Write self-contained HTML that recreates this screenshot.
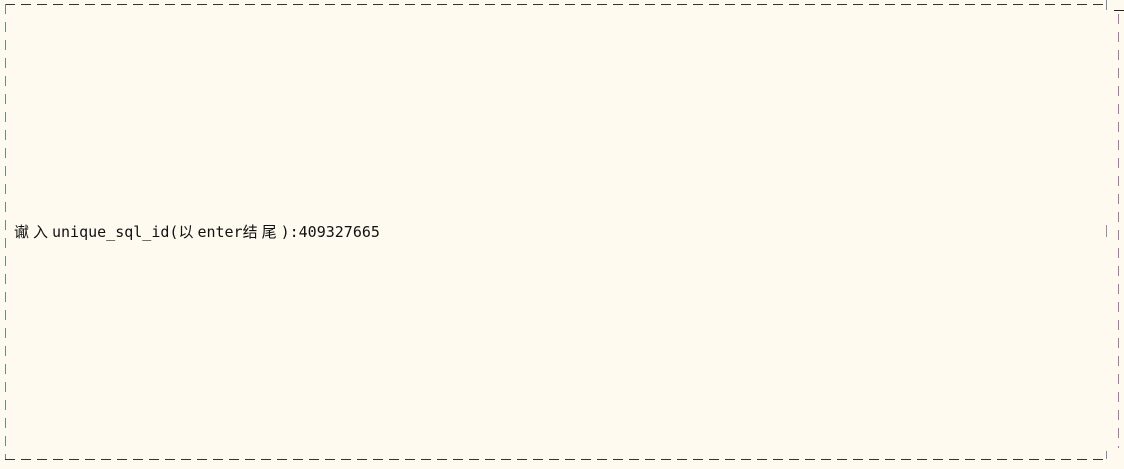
<!DOCTYPE html>
<html><head><meta charset="utf-8"><style>
html,body{margin:0;padding:0;background:#fffaf0;width:1124px;height:469px;overflow:hidden}
.t{position:absolute;left:14px;top:222px;font-family:"DejaVu Sans Mono","Liberation Mono","Noto Sans CJK SC",monospace;font-size:15px;color:#111;white-space:pre;line-height:20px}
.c{display:inline-block;width:19px;font-family:"Noto Sans CJK SC",sans-serif;font-size:15px}
svg{position:absolute;left:0;top:0}
</style></head><body>
<svg width="1124" height="469">
<line x1="5" y1="4.5" x2="1106" y2="4.5" stroke="#333" stroke-width="1" stroke-dasharray="10 6"/>
<line x1="5" y1="459.5" x2="1106" y2="459.5" stroke="#333" stroke-width="1" stroke-dasharray="10 6"/>
<line x1="5.5" y1="4" x2="5.5" y2="459" stroke="#6a8a8a" stroke-width="1" stroke-dasharray="10 8"/>
<line x1="1106.5" y1="0" x2="1106.5" y2="10" stroke="#7a8aa8" stroke-width="1"/>
<line x1="1106.5" y1="225" x2="1106.5" y2="237" stroke="#a08aa8" stroke-width="1"/>
<line x1="1106.5" y1="451" x2="1106.5" y2="459" stroke="#7a8aa8" stroke-width="1"/>
<line x1="1114" y1="10.5" x2="1124" y2="10.5" stroke="#222" stroke-width="1"/>
<line x1="1118.5" y1="14" x2="1118.5" y2="448" stroke="#a07aa0" stroke-width="1" stroke-dasharray="10 8"/>
</svg>
<div class="t"><span class="c">谳</span><span class="c">入</span>unique_sql_id(<span class="c">以</span>enter<span class="c">结</span><span class="c">尾</span>):409327665</div>
</body></html>
